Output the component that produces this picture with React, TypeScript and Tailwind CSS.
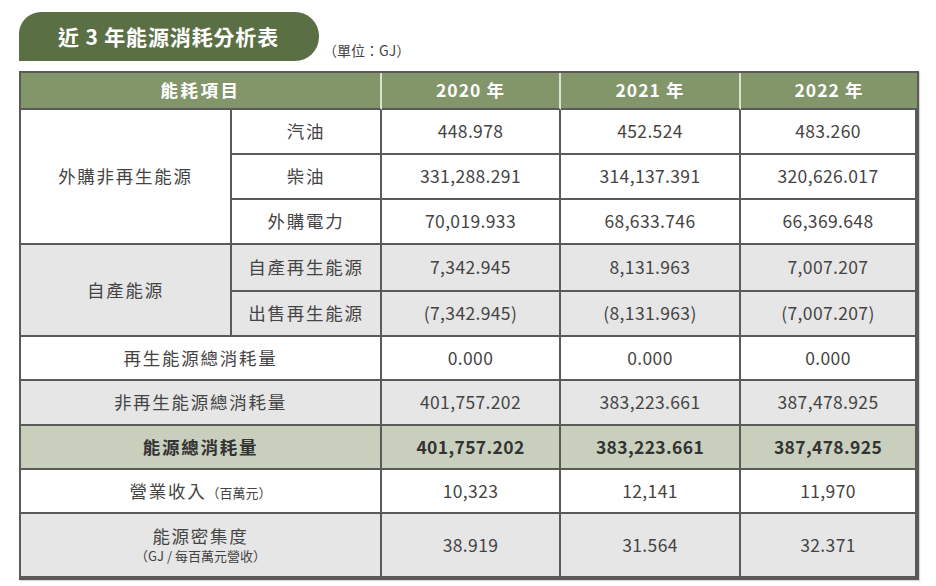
import React from "react";

type Row = {
  label: string;
  vals: string[];
  tone: "white" | "gray" | "green";
  h: number;
};

const years = ["2020 年", "2021 年", "2022 年"];

const purchased: Row[] = [
  { label: "汽油", vals: ["448.978", "452.524", "483.260"], tone: "white", h: 45 },
  { label: "柴油", vals: ["331,288.291", "314,137.391", "320,626.017"], tone: "white", h: 45 },
  { label: "外購電力", vals: ["70,019.933", "68,633.746", "66,369.648"], tone: "white", h: 45 },
];

const selfMade: Row[] = [
  { label: "自產再生能源", vals: ["7,342.945", "8,131.963", "7,007.207"], tone: "gray", h: 47 },
  { label: "出售再生能源", vals: ["(7,342.945)", "(8,131.963)", "(7,007.207)"], tone: "gray", h: 45 },
];

const totals: Row[] = [
  { label: "再生能源總消耗量", vals: ["0.000", "0.000", "0.000"], tone: "white", h: 44 },
  { label: "非再生能源總消耗量", vals: ["401,757.202", "383,223.661", "387,478.925"], tone: "gray", h: 45 },
  { label: "能源總消耗量", vals: ["401,757.202", "383,223.661", "387,478.925"], tone: "green", h: 44 },
];

const toneBg = {
  white: "bg-white",
  gray: "bg-[#e6e6e6]",
  green: "bg-[#c9cfbd]",
};

const cell = "border-r-2 border-b-2 border-[#5a5a5a] text-center align-middle p-0";
const label = `${cell} tracking-[0.1em]`;

function Values({ row, last }: { row: Row; last?: boolean }) {
  return (
    <>
      {row.vals.map((v, i) => (
        <td
          key={i}
          className={`${cell} ${toneBg[row.tone]} tracking-[0.02em] ${i === 2 ? "border-r-0" : ""} ${last ? "border-b-0" : ""} ${
            row.tone === "green" ? "font-bold text-[#333]" : ""
          }`}
          style={{ height: row.h }}
        >
          {v}
        </td>
      ))}
    </>
  );
}

export default function App() {
  return (
    <div
      className="min-h-[586px] w-[936px] bg-white pl-[19px] pt-[12px] text-[#444]"
      style={{ fontFamily: '"Noto Sans CJK TC", "Noto Sans", sans-serif' }}
    >
      {/* 標題 */}
      <div className="flex items-end gap-[4px]">
        <div className="flex h-[49px] w-[300px] items-center rounded-tl-[22px] rounded-r-[24px] bg-[#5b6f45] pl-[39px] text-[21px] font-bold tracking-[0.04em] text-white">
          近 3 年能源消耗分析表
        </div>
        <div className="text-[14px] text-[#444]">（單位：GJ）</div>
      </div>

      {/* 表格 */}
      <div className="mt-[10px] w-[900px] border-2 border-[#5a5a5a] shadow-[1px_1px_1px_rgba(0,0,0,0.15)]">
        <table className="w-full table-fixed border-separate border-spacing-0 text-[17.5px]">
          <colgroup>
            <col className="w-[211px]" />
            <col className="w-[150px]" />
            <col className="w-[179px]" />
            <col className="w-[180px]" />
            <col />
          </colgroup>
          <thead>
            <tr className="bg-[#829669] font-bold text-white">
              <th colSpan={2} className="h-[37px] border-r-2 border-b-2 border-r-[#dde2d4] border-b-[#5a5a5a] p-0 tracking-[0.14em]">
                能耗項目
              </th>
              {years.map((y, i) => (
                <th
                  key={y}
                  className={`h-[37px] border-b-2 border-b-[#5a5a5a] p-0 tracking-[0.06em] ${i < 2 ? "border-r-2 border-r-[#dde2d4]" : ""}`}
                >
                  {y}
                </th>
              ))}
            </tr>
          </thead>
          <tbody>
            {purchased.map((r, i) => (
              <tr key={r.label}>
                {i === 0 && (
                  <td rowSpan={3} className={`${label} bg-white`}>
                    外購非再生能源
                  </td>
                )}
                <td className={`${label} bg-white`}>{r.label}</td>
                <Values row={r} />
              </tr>
            ))}
            {selfMade.map((r, i) => (
              <tr key={r.label}>
                {i === 0 && (
                  <td rowSpan={2} className={`${label} bg-[#e6e6e6]`}>
                    自產能源
                  </td>
                )}
                <td className={`${label} bg-[#e6e6e6]`}>{r.label}</td>
                <Values row={r} />
              </tr>
            ))}
            {totals.map((r) => (
              <tr key={r.label}>
                <td colSpan={2} className={`${label} ${toneBg[r.tone]} ${r.tone === "green" ? "font-bold text-[#333]" : ""}`}>
                  {r.label}
                </td>
                <Values row={r} />
              </tr>
            ))}
            <tr>
              <td colSpan={2} className={`${label} bg-white`}>
                營業收入
                <span className="text-[13px] tracking-normal">（百萬元）</span>
              </td>
              <Values row={{ label: "", vals: ["10,323", "12,141", "11,970"], tone: "white", h: 44 }} />
            </tr>
            <tr>
              <td colSpan={2} className={`${label} border-b-0 bg-[#e6e6e6]`}>
                <div className="leading-[22px]">能源密集度</div>
                <div className="text-[13px] leading-[18px] tracking-normal">（GJ / 每百萬元營收）</div>
              </td>
              <Values row={{ label: "", vals: ["38.919", "31.564", "32.371"], tone: "gray", h: 64 }} last />
            </tr>
          </tbody>
        </table>
      </div>
    </div>
  );
}
